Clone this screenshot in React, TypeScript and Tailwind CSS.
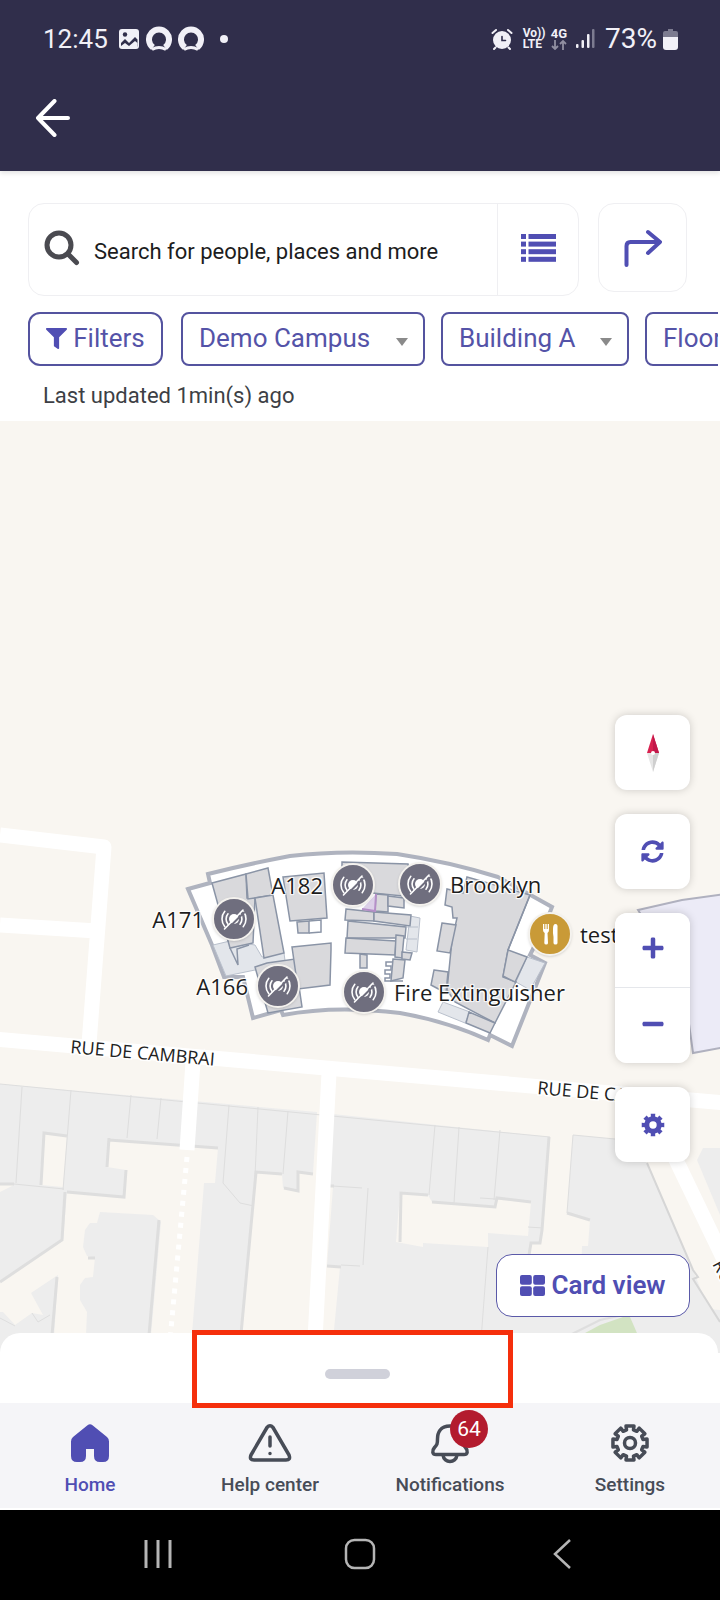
import { FaFilter, FaSyncAlt, FaPlus, FaMinus } from "react-icons/fa";

const pins = [
    { label: "A182", x: 353, y: 885, side: "left", kind: "sensor" },
    { label: "Brooklyn", x: 420, y: 884, side: "right", kind: "sensor" },
    { label: "A171", x: 234, y: 919, side: "left", kind: "sensor" },
    { label: "A166", x: 278, y: 986, side: "left", kind: "sensor" },
    { label: "Fire Extinguisher", x: 364, y: 992, side: "right", kind: "sensor" },
    { label: "test", x: 550, y: 934, side: "right", kind: "food" },
];

// visible window of the map, in map units
const MAP = { top: 421, width: 720, height: 932 };

const cityBlocks = [
    "0,1084 317,1112 313,1173 297,1172 298,1191 283,1188 282,1174 256,1172 241,1334 192,1334 204,1183 215,1183 218,1148 109,1140 107,1167 126,1170 124,1197 67,1192 63,1240 0,1282",
    "100,1212 153,1215 161,1222 151,1335 86,1335 87,1312 80,1300 80,1285 85,1278 93,1277 95,1258 87,1256 83,1247 85,1230 90,1223 97,1223",
    "58,1275 31,1293 43,1315 32,1313 15,1325 3,1312 0,1312 0,1353 53,1353",
    "333,1114 550,1137 543,1230 540,1243 531,1243 528,1255 528,1295 720,1310 720,1353 334,1353 334,1330 340,1267 327,1265 333,1187 325,1185",
    "573,1135 615,1139 647,1163 693,1270 705,1300 720,1320 720,1340 580,1320 582,1246 588,1246 590,1220 567,1213",
    "703,1148 720,1148 720,1215 697,1160",
];

const courtyards = [
    "44,1133 67,1136 63,1187 41,1185",
    "400,1193 428,1195 432,1202 495,1207 497,1198 531,1202 528,1236 488,1233 488,1247 423,1243 423,1247 396,1242",
    "0,1185 14,1185 0,1192",
];

const lotLines = [
    "M22 1087 16 1183M71 1090 63 1190M131 1095 127 1138M161 1098 157 1139M229 1105 223 1183 240 1203 254 1206M258 1107 254 1200M288 1111 283 1174",
    "M435 1125 429 1195M459 1127 454 1203M500 1130 494 1200M368 1188 363 1265M333 1186 362 1188M488 1247 481 1340M528 1227 543 1228M480 1198 496 1199M341 1265 360 1266",
    "M0 1084 550 1137M573 1135 615 1139M573 1135 567 1213M14 1184 64 1189M0 1318 15 1326M32 1313 38 1322 50 1315",
];

const shadows = [
    "M67 1136 44 1133 41 1185M109 1140 218 1148M109 1138 107 1167M126 1170 124 1197 67 1192M65 1192 62 1240 0 1282M159 1220 149 1335M57 1277 52 1335",
    "M313 1174 298 1172 298 1191 284 1188M282 1174 256 1172 241 1334M400 1242 401 1193 428 1195M432 1202 495 1207 497 1198 531 1202M549 1137 542 1230 540 1243 531 1243 529 1255M567 1213 590 1220",
    "M0 1184 14 1184M88 1258 95 1258M327 1266 341 1267M328 1186 334 1186",
];

const rooms = [
    "212,883 246,874 247,898 255,898 253,943 230,948",
    "246,874 268,868 273,895 248,899",
    "255,898 273,895 284,953 264,958",
    "255,967 267,963 295,959 302,1007 268,1013",
    "292,947 331,943 331,950 330,985 298,989",
    "283,877 324,873 327,918 290,921",
    "297,922 309,921 309,933 298,933",
    "342,862 408,864 413,897 342,890",
    "376,894 388,895 388,912 375,911",
    "388,896 404,898 404,908 388,906",
    "346,909 374,912 374,921 345,920",
    "374,912 411,915 410,926 374,921",
    "348,921 406,927 405,938 347,938",
    "346,938 396,941 395,955 345,953",
    "396,935 404,936 402,958 395,957",
    "402,952 412,953 410,960 402,959",
    "360,954 367,955 367,968 360,968",
    "393,959 405,960 403,978 391,981",
    "467,877 530,895 508,950 503,977 516,982 495,1023 455,1002 447,990 452,940 457,918 453,918 452,907 445,905 447,889 463,893",
    "442,923 456,925 450,953 437,951",
    "434,970 448,972 446,993 431,985",
    "508,950 527,957 515,982 503,976",
    "469,1012 495,1023 490,1033 466,1023",
];

const paleRooms = [
    "213,945 230,941 255,945 262,957 284,953 286,968 255,970 226,976",
    "527,957 545,963 530,990 516,982",
    "443,1002 470,1012 465,1023 438,1012",
    "410,916 420,918 417,952 406,950",
];

// outline of a gear with eight teeth, centred on 0,0
function gearPath(outer: number, inner: number, tip: number, root: number) {
    const pts: string[] = [];
    for (let i = 0; i < 8; i++) {
        const a = (i * Math.PI) / 4;
        for (const [r, off] of [[inner, -root], [outer, -tip], [outer, tip], [inner, root]]) {
            pts.push(`${(r * Math.cos(a + off)).toFixed(2)} ${(r * Math.sin(a + off)).toFixed(2)}`);
        }
    }
    return `M${pts.join("L")}Z`;
}

function StatusBar() {
    return (
        <div className="flex h-[78px] items-center justify-between pl-[43px] pr-[42px] text-[26px] text-[#f1f0f7]">
            <div className="flex items-center">
                <span>12:45</span>
                <svg className="ml-2.5 h-[22px] w-[22px]" viewBox="0 0 22 22">
                    <rect x="1" y="1" width="20" height="20" rx="3" fill="currentColor" />
                    <circle cx="7" cy="6.500" r="2.200" fill="#302e4b" />
                    <path d="M3 15l4-4 4 4 6-6 2.500 2.500V18.500H3z" fill="#302e4b" />
                    <path d="M3 19v-1l4-3 4 3 6-5 2.500 2V19z" fill="currentColor" />
                </svg>
                {[0, 1].map((n) => (
                    <svg key={n} className="ml-1.5 h-[26px] w-[26px]" viewBox="0 0 26 26" fill="none">
                        <path d="M7 21.500a10 10 0 1 1 12 0" stroke="currentColor" strokeWidth="6" />
                        <path d="M6 23.500q7-4 14 0" stroke="currentColor" strokeWidth="3" />
                    </svg>
                ))}
                <span className="ml-4 h-2 w-2 rounded-full bg-[#f1f0f7]" />
            </div>
            <div className="flex items-center">
                <svg className="h-[22px] w-[22px]" viewBox="0 0 22 22" fill="none" stroke="currentColor" strokeLinecap="round">
                    <circle cx="11" cy="12" r="9" fill="currentColor" stroke="none" />
                    <path d="M1.500 5 5 2M20.500 5 17 2M4.500 19.500 3 21M17.500 19.500 19 21" strokeWidth="2" />
                    <path d="M11 8.500v4h3.500" stroke="#302e4b" strokeWidth="1.600" />
                </svg>
                <span className="ml-2.5 w-[22px] text-[12px] leading-[11px] font-bold">
                    Vo))
                    <br />
                    LTE
                </span>
                <span className="ml-1.5 flex flex-col items-center text-[13px] leading-[12px] font-bold">
                    4G
                    <svg className="h-[10px] w-4 opacity-50" viewBox="0 0 16 10" fill="none" stroke="currentColor" strokeWidth="1.800">
                        <path d="M4 0v9M1 6l3 3 3-3M12 10V1M9 4l3-3 3 3" />
                    </svg>
                </span>
                <svg className="ml-2 h-5 w-5" viewBox="0 0 20 20" fill="currentColor">
                    <rect x="1" y="15" width="2.500" height="4" rx="1" />
                    <rect x="6.500" y="11" width="2.500" height="8" rx="1" />
                    <rect x="12" y="5" width="2.500" height="14" rx="1" />
                    <rect x="17" y="0" width="2.500" height="19" rx="1" opacity="0.400" />
                </svg>
                <span className="ml-2.5 text-[28px]">73%</span>
                <svg className="ml-1.5 h-[21px] w-[15px]" viewBox="0 0 15 21" fill="currentColor">
                    <path d="M5 0h5v2h3q2 0 2 2v4H0V4q0-2 2-2h3z" opacity="0.400" />
                    <path d="M0 8h15v10q0 3-3 3H3q-3 0-3-3z" />
                </svg>
            </div>
        </div>
    );
}

function SensorIcon() {
    return (
        <svg className="h-[26px] w-[26px]" viewBox="0 0 26 26" fill="none" stroke="white" strokeWidth="1.600" strokeLinecap="round">
            <circle cx="13" cy="13" r="5" fill="white" stroke="none" />
            <path d="M7 7.800a8 8 0 0 0 0 10.400M3.800 5.300a12 12 0 0 0 0 15.400" />
            <path d="M19 7.800a8 8 0 0 1 0 10.400M22.200 5.300a12 12 0 0 1 0 15.400" />
            <path d="M5.500 24 23 6.500" stroke="#6f6e7e" strokeWidth="2" />
            <path d="M3.500 23 22 4" />
        </svg>
    );
}

function FoodIcon() {
    return (
        <svg className="h-[22px] w-[22px]" viewBox="0 0 22 22" fill="white">
            <path d="M4 1h1.300v5h1V1h1.400v5h1V1H10v6q0 2-1.500 3l.5 10q0 1.500-1.800 1.500T5.300 20l.4-10Q4 9 4 7z" />
            <path d="M14 6q0-5 2.500-5T18.500 5v15q0 1.500-2 1.500T14.500 20v-6q-.8-4-.5-8z" />
        </svg>
    );
}

function CampusMap() {
    return (
        <svg className="absolute inset-0 h-full w-full" viewBox={`0 ${MAP.top} ${MAP.width} ${MAP.height}`} preserveAspectRatio="none">
            <g fill="#ededed">
                {cityBlocks.map((p) => <polygon key={p} points={p} />)}
            </g>
            <g fill="#f9f6f1">
                {courtyards.map((p) => <polygon key={p} points={p} />)}
            </g>
            <polygon points="572,1340 600,1325 623,1317 630,1317 640,1340 572,1340" fill="#d2e3c2" />
            <g fill="none" stroke="#dedede">
                {lotLines.map((d) => <path key={d} d={d} />)}
                {shadows.map((d) => <path key={d} d={d} strokeWidth="3" />)}
                <path d="M572 1334 600 1320 623 1315" strokeWidth="2" />
                <path d="M647 1163 693 1270 698 1277 693 1279 720 1322" strokeWidth="2" stroke="#d6d6d6" />
            </g>

            {/* streets */}
            <g fill="none" stroke="white" strokeWidth="15" strokeLinejoin="round">
                <path d="M0 835 104 847 89 1044M0 925 97 931" />
                <path d="M-5 1039 360 1071 725 1103" />
                <path d="M193 1062 187 1150M329 1073 315 1340" />
                <path d="M652 1110 730 1272" />
                <path d="M187 1157 170 1340" strokeWidth="5" strokeDasharray="5 6" />
            </g>

            <polygon points="638,910 682,900 725,894 725,1047 693,1053 683,980" fill="#ecebf7" stroke="#b0b1bf" strokeWidth="2" />

            {/* building A */}
            <path
                d="M188 889 210 883 208 874Q248 864 290 856 340 850 397 854 450 862 498 877L552 907 545 925 530 955 545 963 512 1046 490 1035 488 1040Q446 1021 400 1013 335 1005 283 1015L281 1010 253 1018 243 977 224 977 212 945Z"
                fill="white"
                stroke="#afb3bf"
                strokeWidth="4"
            />
            <g fill="#e3e6eb" stroke="#b9c0cc" strokeWidth="1">
                {paleRooms.map((p) => <polygon key={p} points={p} />)}
            </g>
            <g fill="#d9d9dc" stroke="#8a94a6" strokeWidth="1.500">
                {rooms.map((p) => <polygon key={p} points={p} />)}
            </g>
            <path d="M309 921 321 920 321 932 309 933M230 948 238 965 237 949 249 945M530 895 508 950M392 962h-6v4h5v4h-6v4h5v4h-5v3l18 0" fill="none" stroke="#8a94a6" strokeWidth="1.500" />
            <path d="M362 909 375 911 376 894" fill="#dcd0e8" stroke="#b58fc8" strokeWidth="2" />
            <path d="M407 927h11M406 939h11" stroke="#b9c0cc" />

            {/* street names */}
            <g className="font-['Open_Sans',sans-serif] text-[18px]" fill="#222" stroke="white" strokeWidth="3" paintOrder="stroke">
                <text transform="translate(70 1053) rotate(5)">RUE DE CAMBRAI</text>
                <text transform="translate(537 1094) rotate(5)">RUE DE CAMBRAI</text>
                <text transform="translate(712 1264) rotate(62)">RUE</text>
            </g>
        </svg>
    );
}

const mapButton = "flex h-[75px] w-[75px] items-center justify-center bg-white text-[#504eb3]";
const mapCard = "rounded-xl shadow-[0_0_8px_rgba(0,0,0,0.18)]";

function MapControls() {
    return (
        <div className="absolute right-[30px] bottom-9 flex flex-col items-end gap-6">
            <button aria-label="Reset north" className={`${mapButton} ${mapCard}`}>
                <svg className="h-10 w-4" viewBox="0 0 16 40">
                    <path d="M8 1 2 20h12z" fill="#d8214f" />
                    <path d="M8 1v19h6z" fill="#c2184a" />
                    <path d="M8 39 2 20h12z" fill="#e6e6e6" />
                    <path d="M8 39V20h6z" fill="#cfcfcf" />
                    <circle cx="8" cy="20" r="2" fill="white" />
                </svg>
            </button>
            <button aria-label="Refresh" className={`${mapButton} ${mapCard}`}>
                <FaSyncAlt className="h-[23px] w-[23px]" />
            </button>
            <div className={`divide-y divide-gray-200 overflow-hidden ${mapCard}`}>
                <button aria-label="Zoom in" className={`${mapButton} pb-1`}>
                    <FaPlus className="h-6 w-6" />
                </button>
                <button aria-label="Zoom out" className={`${mapButton} pb-1`}>
                    <FaMinus className="h-6 w-6" />
                </button>
            </div>
            <button aria-label="Map settings" className={`${mapButton} ${mapCard}`}>
                <svg className="h-6 w-6" viewBox="-12 -12 24 24" fill="currentColor">
                    <path d={`${gearPath(11.5, 8.8, 0.2, 0.24)}M3.700 0A3.700 3.700 0 1 0 -3.700 0A3.700 3.700 0 1 0 3.700 0Z`} fillRule="evenodd" />
                </svg>
            </button>
            <button className="mt-[68px] flex h-[63px] w-[194px] items-center justify-center gap-1.5 rounded-2xl border border-[#5a59a8] bg-white text-[26px] font-semibold text-[#504eb3]">
                <svg className="h-[21px] w-[25px]" viewBox="0 0 25 21" fill="currentColor">
                    <rect width="11.800" height="9.800" rx="2" />
                    <rect x="13.200" width="11.800" height="9.800" rx="2" />
                    <rect y="11.200" width="11.800" height="9.800" rx="2" />
                    <rect x="13.200" y="11.200" width="11.800" height="9.800" rx="2" />
                </svg>
                Card view
            </button>
        </div>
    );
}

function FilterSelect({ label, option, className }: { label: string; option: string; className: string }) {
    return (
        <div className={`relative shrink-0 ${className}`}>
            <select aria-label={label} className="h-[54px] w-full appearance-none rounded-lg border-2 border-[#54539f] bg-white pb-0.5 pl-4 text-[26px] text-[#5453a8]">
                <option>{option}</option>
            </select>
            <svg className="pointer-events-none absolute top-[26px] right-[17px] h-2 w-3" viewBox="0 0 12 8" fill="#8a8a8a">
                <path d="M0 0h12L6 8z" />
            </svg>
        </div>
    );
}

function SearchPanel() {
    return (
        <section className="bg-white pt-8">
            <div className="flex items-start gap-[19px] pr-[33px] pl-7">
                <div className="flex h-[93px] min-w-0 flex-1 items-center rounded-2xl border border-[#efeff2]">
                    <svg className="mb-1 ml-[15px] h-9 w-9 shrink-0" viewBox="0 0 36 36" fill="none" stroke="#4a4a50">
                        <circle cx="15" cy="15" r="12" strokeWidth="5" />
                        <path d="M24.500 24.500l8 8" strokeWidth="5" strokeLinecap="round" />
                    </svg>
                    <input
                        type="text"
                        aria-label="Search"
                        placeholder="Search for people, places and more"
                        className="ml-3.5 h-full min-w-0 flex-1 bg-transparent pt-1 text-[22px] outline-none placeholder:text-[#1c1c20]"
                    />
                    <button aria-label="Show list" className="flex h-full w-[81px] items-center justify-center border-l border-[#efeff2] pb-1">
                        <svg className="h-7 w-[35px]" viewBox="0 0 35 28" fill="#504eb3">
                            {[0, 7.6, 15.2, 22.8].map((y) => (
                                <g key={y}>
                                    <rect y={y} width="5" height="5" />
                                    <rect x="7.500" y={y} width="27.500" height="5" />
                                </g>
                            ))}
                        </svg>
                    </button>
                </div>
                <button aria-label="Directions" className="flex h-[89px] w-[89px] items-center justify-center rounded-2xl border border-[#efeff2]">
                    <svg className="h-[38px] w-[38px]" viewBox="0 0 38 38" fill="none" stroke="#504eb3" strokeWidth="4" strokeLinecap="round" strokeLinejoin="round">
                        <path d="M2.500 36V17q0-4 4-4H35M24 3l12 10-12 11" />
                    </svg>
                </button>
            </div>
            <div className="mr-0.5 mt-4 flex overflow-hidden pl-7">
                <button className="mr-[18px] flex h-[54px] w-[135px] shrink-0 items-center justify-center gap-1.5 rounded-xl border-2 border-[#54539f] pb-0.5 text-[26px] text-[#5453a8]">
                    <FaFilter className="h-[21px] w-[21px] text-[#504eb3]" />
                    Filters
                </button>
                <FilterSelect label="Campus" option="Demo Campus" className="mr-4 w-[244px]" />
                <FilterSelect label="Building" option="Building A" className="mr-4 w-[188px]" />
                <FilterSelect label="Floor" option="Floor 1" className="w-[160px]" />
            </div>
            <p className="px-[43px] pt-[15px] pb-2.5 text-[22px] leading-[30px] text-[#3d3f45]">Last updated 1min(s) ago</p>
        </section>
    );
}

const tabs = [
    {
        label: "Home",
        icon: (
            <path
                d="M16.500 1.200q2.500-1.800 5 0L36 13q2 1.700 2 4.500V32q0 6-6 6h-3q-6 0-6-6v-7h-8v7q0 6-6 6H6q-6 0-6-6V17.500Q0 14.700 2 13z"
                fill="#504eb3"
            />
        ),
    },
    {
        label: "Help center",
        icon: (
            <g fill="none" stroke="#474c57" strokeWidth="3.500" strokeLinecap="round" strokeLinejoin="round">
                <path d="M16 3.500q3-3.500 6 0L38 31q2 5-3 5H3q-5 0-3-5z" />
                <path d="M19 13v9M19 29.500v.1" />
            </g>
        ),
    },
    {
        label: "Notifications",
        icon: (
            <g fill="none" stroke="#474c57" strokeWidth="3.500" strokeLinejoin="round">
                <path d="M19 2C9 2 6.500 9 6.500 15c0 5-.5 6-3 8.500C.5 27 1.500 30.500 5 30.500h28c3.500 0 4.500-3.500 1.500-7-2.500-2.500-3-3.500-3-8.500C31.500 9 29 2 19 2z" />
                <path d="M12 31c1 8.500 13 8.500 14 0" />
            </g>
        ),
    },
    {
        label: "Settings",
        icon: (
            <g transform="translate(19 19)" fill="none" stroke="#474c57" strokeWidth="3.500" strokeLinejoin="round">
                <path d={gearPath(17.5, 13.5, 0.23, 0.26)} />
                <circle r="5.500" />
            </g>
        ),
    },
];

function TabBar() {
    return (
        <nav className="grid h-[107px] grid-cols-4 border-b-2 border-white bg-[#f5f5f8]">
            {tabs.map((tab, i) => (
                <a key={tab.label} href="#" className={`flex flex-col items-center pt-[21px] text-[19px] leading-6 font-medium ${i === 0 ? "text-[#504eb3]" : "text-[#474c57]"}`}>
                    <span className="relative mb-[11px]">
                        <svg className="h-[38px] w-[38px] overflow-visible" viewBox="0 0 38 38">
                            {tab.icon}
                        </svg>
                        {tab.label === "Notifications" && (
                            <span className="absolute -top-3.5 left-[19px] flex h-[38px] w-[38px] items-center justify-center rounded-full bg-[#b31b2e] text-[21px] font-normal text-white">
                                64
                            </span>
                        )}
                    </span>
                    {tab.label}
                </a>
            ))}
        </nav>
    );
}

function SystemNav() {
    return (
        <div className="grid h-[90px] grid-cols-3 place-items-center bg-black px-[57px] pb-0.5">
            <button aria-label="Recents">
                <svg className="h-8 w-8" viewBox="0 0 32 32" stroke="#b5b5b5" strokeWidth="3">
                    <path d="M4 2v28M16 2v28M28 2v28" />
                </svg>
            </button>
            <button aria-label="Home screen">
                <svg className="h-8 w-8" viewBox="0 0 32 32" fill="none" stroke="#b5b5b5" strokeWidth="2.500">
                    <rect x="2" y="2" width="28" height="28" rx="8.500" />
                </svg>
            </button>
            <button aria-label="Back">
                <svg className="h-8 w-8" viewBox="0 0 32 32" fill="none" stroke="#b5b5b5" strokeWidth="2.500">
                    <path d="M24 2 9 16l15 14" />
                </svg>
            </button>
        </div>
    );
}

export default function App() {
    return (
        <div className="flex min-h-screen flex-col bg-white font-[Roboto,sans-serif]">
            <header className="relative z-10 bg-[#302e4b] pb-[13px] shadow-[0_2px_5px_rgba(0,0,0,0.12)]">
                <StatusBar />
                <div className="flex h-20 items-center pl-[35px]">
                    <button aria-label="Back">
                        <svg className="h-[38px] w-9" viewBox="0 0 36 38" fill="none" stroke="white" strokeWidth="4" strokeLinecap="round" strokeLinejoin="round">
                            <path d="M33 19H3M19.500 2 3 19l16.500 17" />
                        </svg>
                    </button>
                </div>
            </header>

            <SearchPanel />

            <main className="relative min-h-[720px] flex-1 overflow-hidden bg-[#f9f6f1]">
                <CampusMap />
                {pins.map((pin) => (
                    <div
                        key={pin.label}
                        className="absolute -translate-x-1/2 -translate-y-1/2"
                        style={{
                            left: `${(pin.x / MAP.width) * 100}%`,
                            top: `${((pin.y - MAP.top) / MAP.height) * 100}%`,
                        }}
                    >
                        <div className={`flex h-11 w-11 items-center justify-center rounded-full border-2 border-[#f4f2ee] shadow-sm ${pin.kind === "food" ? "bg-[#c99a37]" : "bg-[#6f6e7e]"}`}>
                            {pin.kind === "food" ? <FoodIcon /> : <SensorIcon />}
                        </div>
                        <span
                            className={`absolute top-2 font-['Open_Sans',sans-serif] text-[22px] leading-7 whitespace-nowrap text-[#1d1d1d] [text-shadow:0_0_2px_white,1px_1px_1px_white,-1px_-1px_1px_white,1px_-1px_1px_white,-1px_1px_1px_white] ${pin.side === "left" ? "right-full mr-2" : "left-full ml-2"}`}
                        >
                            {pin.label}
                        </span>
                    </div>
                ))}
                <MapControls />
            </main>

            <section className="relative z-10 -mt-5 mr-0.5 flex h-[70px] justify-center rounded-t-[20px] bg-white pt-9 pr-1">
                <button aria-label="Drag to expand" className="h-2.5 w-[65px] rounded-full bg-[#d0d1da]" />
                <div className="pointer-events-none absolute -top-[3px] left-[192px] h-[78px] w-[321px] border-[5px] border-[#f52f0c]" />
            </section>

            <TabBar />
            <SystemNav />
        </div>
    );
}
